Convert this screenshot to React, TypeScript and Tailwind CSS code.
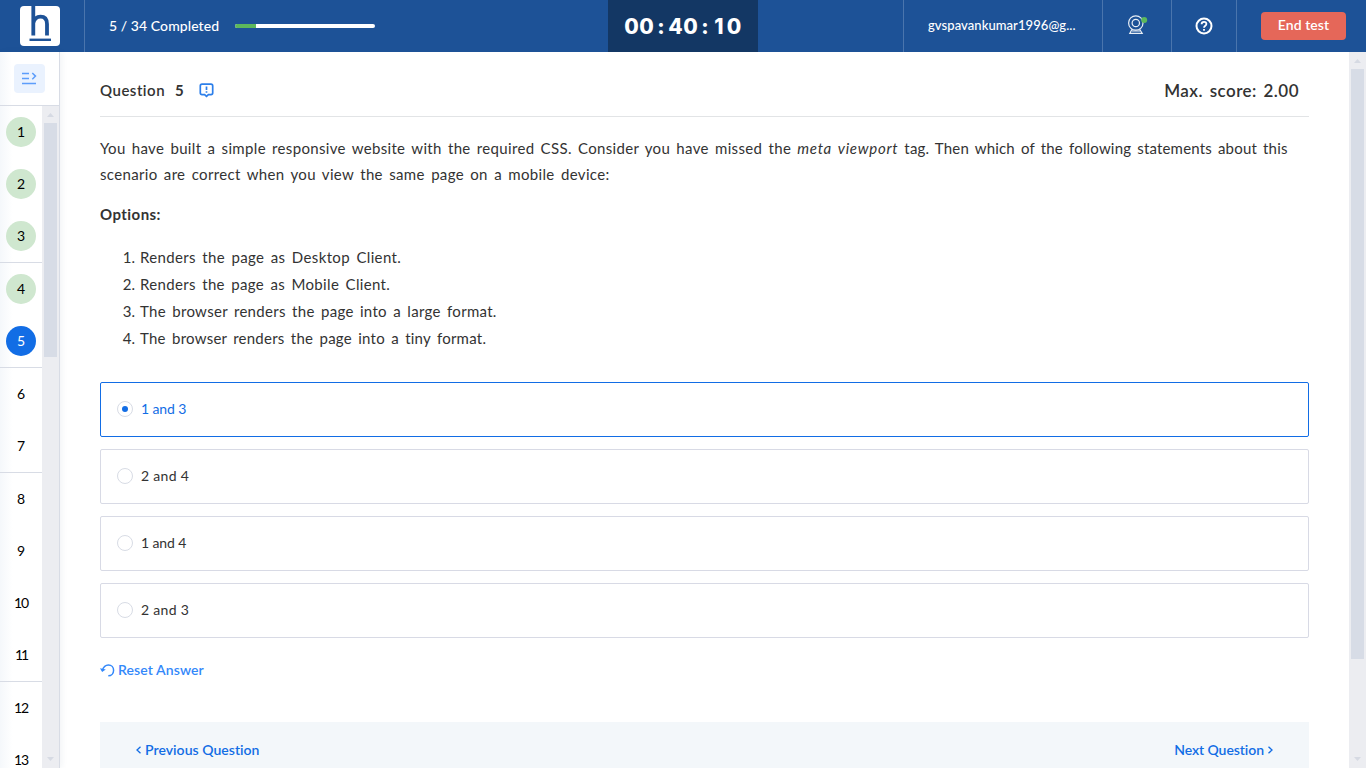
import React from "react";

const groups: number[][] = [[1, 2, 3], [4, 5], [6, 7], [8, 9, 10, 11], [12, 13]];
const statements: [string, string][] = [
  ["Renders the page as Desktop Client.", "tracking-[0.36px]"],
  ["Renders the page as Mobile Client.", "tracking-[0.34px]"],
  ["The browser renders the page into a large format.", "tracking-[0.3px]"],
  ["The browser renders the page into a tiny format.", "tracking-[0.24px]"],
];
const answers = ["1 and 3", "2 and 4", "1 and 4", "2 and 3"];
const timer: [string, string][] = [
  ["0", "w-[15px]"], ["0", "w-[15px]"], [":", "w-[14px]"],
  ["4", "w-[15px]"], ["0", "w-[15px]"], [":", "w-[14px]"],
  ["1", "w-[14px]"], ["0", "w-[16px]"],
];

function Logo() {
  return (
    <svg width="40" height="40" viewBox="0 0 40 40" className="block">
      <rect width="40" height="40" rx="4" fill="#fff" />
      <path d="M13.3 0V29.5M13.3 17C14.5 12 17 10.6 20.5 10.6C25 10.6 27 13.5 27 18V29.5" fill="none" stroke="#1d5297" strokeWidth="3.8" />
      <path d="M9.5 33.8H31" stroke="#1d5297" strokeWidth="2.4" />
    </svg>
  );
}

function Webcam() {
  return (
    <svg width="20" height="20" viewBox="0 0 20 20" fill="none" stroke="#e8eef5" strokeWidth="1.2" className="block">
      <circle cx="7.8" cy="8" r="7.2" />
      <circle cx="7.8" cy="8" r="3.7" />
      <path d="M4 14.2L1.8 18.4H14.2L11.6 14.2M4 16H12" />
      <circle cx="16.2" cy="5" r="3" fill="#5cb85c" stroke="none" />
    </svg>
  );
}

function Help() {
  return (
    <svg width="18" height="18" viewBox="0 0 18 18" fill="none" stroke="#fff" strokeWidth="2" className="block">
      <circle cx="9" cy="9" r="7.5" />
      <path d="M6.6 7.3C6.6 5.7 7.6 4.9 9 4.9S11.4 5.8 11.4 7.1C11.4 8.8 9 8.7 9 10.8M9 11.9V13.7" strokeWidth="1.8" />
    </svg>
  );
}

function Scrollbar({ thumb }: { thumb: string }) {
  return (
    <div className="flex w-[17px] shrink-0 flex-col items-center bg-[#ecedf1]">
      <div className="flex h-[17px] items-center">
        <svg width="7" height="4" viewBox="0 0 7 4"><path d="M3.5 0L7 4H0Z" fill="#d6dae3" /></svg>
      </div>
      <div className={`w-[13px] bg-[#d7dce6] ${thumb}`} />
      <div className="mt-auto flex h-[17px] items-center pb-[2px]">
        <svg width="7" height="4" viewBox="0 0 7 4"><path d="M0 0H7L3.5 4Z" fill="#d6dae3" /></svg>
      </div>
    </div>
  );
}

export default function App() {
  return (
    <div className="flex h-[768px] w-[1366px] flex-col overflow-hidden bg-white font-['Lato',sans-serif] text-[#333]">
      <header className="flex h-[52px] shrink-0 items-center bg-[#1d5297] text-white">
        <div className="flex h-full w-[85px] items-center border-r border-[#4a75ad] pl-5"><Logo /></div>
        <div className="w-[126px] pl-6 text-sm font-medium whitespace-nowrap"><span className="tracking-[0.07px]">5 / 34 Completed</span></div>
        <div className="ml-6 h-1 w-[140px] overflow-hidden rounded-sm bg-white"><div className="h-full w-[21px] bg-[#5cb85c]" /></div>
        <div className="ml-[233px] flex h-full w-[150px] items-center bg-[#133764] pl-[16px] pt-[2px] font-['Inter',sans-serif] text-[21px] font-extrabold">
          {timer.map(([c, w], i) => <span key={i} className={`flex justify-center ${w}`}>{c}</span>)}
        </div>
        <div className="ml-[145px] flex h-full w-[200px] items-center border-x border-[#4a75ad] pl-6 text-[13px] font-medium whitespace-nowrap"><span className="tracking-[0.07px]">gvspavankumar1996@g...</span></div>
        <div className="flex h-full w-[69px] items-center border-r border-[#4a75ad] pl-[25px] pb-[2px]"><Webcam /></div>
        <div className="flex h-full w-[65px] items-center justify-center border-r border-[#4a75ad]"><Help /></div>
        <button className="ml-6 h-7 w-[85px] rounded bg-[#e56759] pb-[2px] text-sm font-semibold"><span className="tracking-[0.05px]">End test</span></button>
      </header>

      <div className="flex min-h-0 flex-1">
        <aside className="flex w-[60px] shrink-0 flex-col border-r border-[#d8dce5] shadow-[2px_0_6px_rgba(30,60,110,0.06)]">
          <div className="flex h-[54px] shrink-0 items-center border-b border-[#d8dce5] bg-linear-to-r from-[#f5f8fb] to-white to-20% pl-[14px]">
            <div className="mb-px flex h-[29px] w-[31px] items-center justify-center rounded bg-[#eaf2fe]">
              <svg width="15" height="13" viewBox="0 0 15 13" fill="none" stroke="#5c9dfb" strokeWidth="1.5">
                <path d="M0 1.5H7M0 6.5H7M0 11.5H14M10.3 1L13.5 4.1L10.3 7.2" />
              </svg>
            </div>
          </div>
          <div className="flex min-h-0 flex-1">
            <div className="flex w-[42px] flex-col overflow-hidden bg-linear-to-r from-[#f5f8fb] to-white to-30%">
              {groups.map((g) => (
                <div key={g[0]} className="shrink-0 border-b border-[#d8dce5]">
                  {g.map((n) => (
                    <div key={n} className="flex h-[52px] items-center justify-center">
                      <span className={`flex size-[30px] items-center justify-center rounded-full text-sm ${n === 11 ? "tracking-[-2px]" : n > 9 ? "tracking-[-1px]" : ""} ${n < 5 ? "bg-[#cfe7cf] text-black" : n === 5 ? "bg-[#126de5] text-white" : "text-black"}`}>{n}</span>
                    </div>
                  ))}
                </div>
              ))}
            </div>
            <Scrollbar thumb="h-[234px]" />
          </div>
        </aside>

        <main className="flex min-w-0 flex-1 flex-col pl-10 pr-10">
          <div className="flex h-[65px] shrink-0 items-center border-b border-[#e2e4e6] pt-[13px] font-semibold">
            <h1 className="w-[75px] text-[15px] whitespace-nowrap"><span className="tracking-[0.5px]">Question</span></h1>
            <span className="text-[15px] font-bold">5</span>
            <svg className="ml-[15px]" width="15" height="15" viewBox="0 0 15 15" fill="none" stroke="#2d7fea" strokeWidth="1.7">
              <path d="M3 1.2H12Q13.7 1.2 13.7 3V10Q13.7 11.6 12 11.6H9.4L7.5 13.4L5.6 11.6H3Q1.3 11.6 1.3 10V3Q1.3 1.2 3 1.2ZM7.5 3.4V7.1M7.5 8.2V9.8" />
            </svg>
            <span className="ml-auto pt-px pr-[10px] text-[17px] tracking-[0.46px] [word-spacing:2px]">Max. score: 2.00</span>
          </div>
          <div className="mt-[18px] shrink-0 text-[15px] leading-[26px] whitespace-nowrap">
            <p className="tracking-[0.33px] [word-spacing:2.05px]">You have built a simple responsive website with the required CSS. Consider you have missed the <em className="tracking-[0.7px]">meta viewport</em><span className="tracking-[0.18px]"> tag. Then which of the following statements about this</span></p>
            <p className="tracking-[0.33px] [word-spacing:2.2px]">scenario are correct when you view the same page on a mobile device:</p>
            <p className="mt-[14px] font-bold tracking-[0.45px]">Options:</p>
            <ol className="mt-[17px] leading-[27px]">
              {statements.map(([s, tracking], i) => (
                <li key={s} className="flex"><span className="w-[35px] text-right">{i + 1}.</span><span className={`ml-[5px] [word-spacing:2.2px] ${tracking}`}>{s}</span></li>
              ))}
            </ol>
          </div>
          <div className="mt-[30px] flex shrink-0 flex-col gap-3">
            {answers.map((a, i) => (
              <label key={a} className={`flex h-[55px] items-center rounded-[2px] border pb-[2px] pl-4 text-sm ${i === 0 ? "border-[#126de5] text-[#126de5]" : "border-[#d8dae5]"}`}>
                <span className="flex size-4 items-center justify-center rounded-full border border-[#d8dce5]">{i === 0 && <span className="size-1.5 rounded-full bg-[#126de5]" />}</span>
                <span className={`ml-2 ${a[0] === "1" ? "tracking-[-0.1px]" : "tracking-[0.3px]"}`}>{a}</span>
              </label>
            ))}
          </div>
          <button className="mt-[22px] flex h-5 shrink-0 items-center self-start text-sm font-semibold text-[#3388fa]">
            <svg width="15" height="13" viewBox="0 0 15 13" fill="none" stroke="#3388fa" strokeWidth="1.5">
              <path d="M2.2 6.5C3.5 2.7 5.7 1 8.4 1C11.5 1 13.6 3.2 13.6 6.2C13.6 9.4 11.4 11.8 8.3 11.8" />
              <path d="M0 4.2L2.1 8L5.8 5.6Z" fill="#3388fa" stroke="none" />
            </svg>
            <span className="ml-[3px] tracking-[0.1px]">Reset Answer</span>
          </button>
          <footer className="mt-[42px] flex h-[57px] shrink-0 items-center justify-between bg-[#f3f7fa] px-9 pb-px text-sm font-semibold text-[#126de5]">
            <button className="flex items-center gap-[4px]"><svg width="5" height="8" viewBox="0 0 5 8" fill="none" stroke="currentColor" strokeWidth="1.3"><path d="M4.5 .8L1 4L4.5 7.2" /></svg><span className="tracking-[0.04px]">Previous Question</span></button>
            <button className="flex items-center gap-[4px]"><span className="tracking-[-0.06px]">Next Question</span><svg width="5" height="8" viewBox="0 0 5 8" fill="none" stroke="currentColor" strokeWidth="1.3"><path d="M.5 .8L4 4L.5 7.2" /></svg></button>
          </footer>
        </main>
        <Scrollbar thumb="h-[590px]" />
      </div>
    </div>
  );
}
